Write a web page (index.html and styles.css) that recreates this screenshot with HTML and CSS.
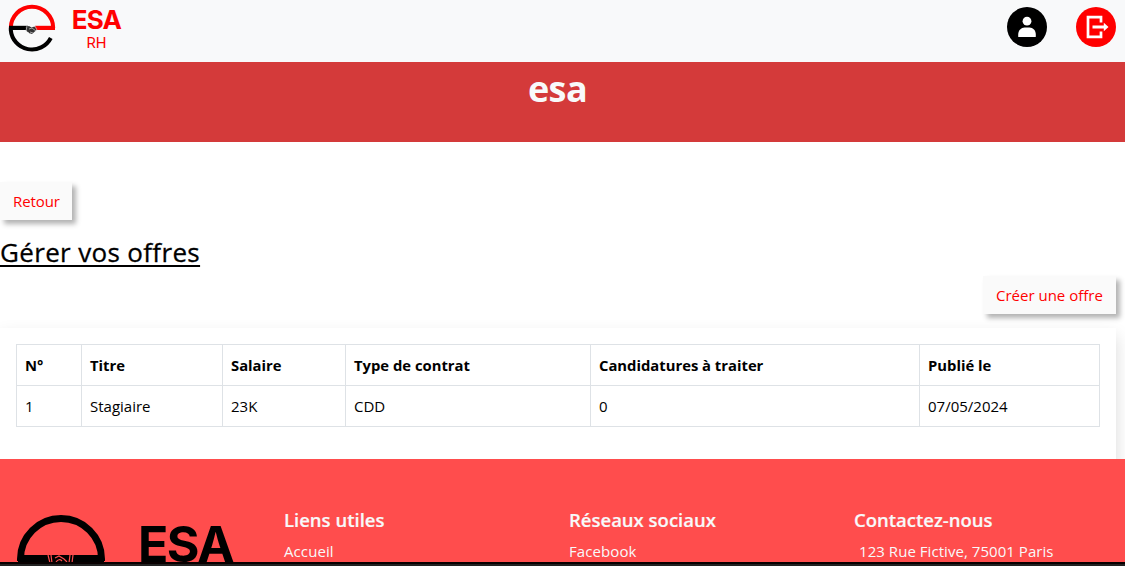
FILE: index.html
```html
<!DOCTYPE html>
<html lang="fr">
<head>
<meta charset="utf-8">
<title>ESA RH</title>
<link rel="stylesheet" href="styles.css">
</head>
<body>
<div class="page">
  <header class="topbar">
    <div class="brand">
      <svg class="brand-mark" width="48" height="48" viewBox="0 0 48 48" fill="none">
        <path d="M2.8 24V26A21.2 21.2 0 0 0 42.8 34" stroke="#000" stroke-width="4"/>
        <path d="M2.8 24A21.2 21.2 0 0 1 45.2 24" stroke="#f00" stroke-width="4"/>
        <path d="M1 21.8H20V26H1Z" fill="#000"/>
        <path d="M27 21.8H47V26H27Z" fill="#f00"/>
        <path d="M17.5 23L21 22L23.5 23.5L26.5 22.5L28.5 26L24 30L21 29L18.5 27Z" fill="#333"/>
        <path d="M19 22L18 27M21 25L24 24L28 27M22 28L25 29M27 22L29 26M20 28L22 30" stroke="#bbb" stroke-width=".8"/>
      </svg>
      <div class="brand-text"><span class="brand-name">ESA</span><span class="brand-sub">RH</span></div>
    </div>
    <nav class="actions">
      <svg width="40" height="40" viewBox="0 0 40 40">
        <circle cx="20" cy="20" r="20" fill="#000"/>
        <circle cx="20" cy="14.2" r="4.4" fill="#fff"/>
        <path d="M11.2 29.5V28C11.2 23.3 14.2 20.5 17.5 20.5H22.5C26 20.5 28.8 23.3 28.8 28V29.5Q28.8 30 28.2 30H11.8Q11.2 30 11.2 29.5Z" fill="#fff"/>
      </svg>
      <svg width="40" height="40" viewBox="0 0 40 40">
        <circle cx="20" cy="20" r="20" fill="#f00"/>
        <path d="M25 15.5V10.2H12V29.8H25V24.5" fill="none" stroke="#fff" stroke-width="2.7"/>
        <path d="M16.5 18.6H27.8V15.8L32.5 20L27.8 24.2V21.4H16.5Z" fill="#fff"/>
      </svg>
    </nav>
  </header>
  <section class="banner"><h1>esa</h1></section>
  <main>
    <a class="btn back"><span>Retour</span></a>
    <h2><span>Gérer vos offres</span></h2>
    <div class="create-row"><a class="btn create"><span>Créer une offre</span></a></div>
    <section class="card">
      <table>
        <colgroup><col class="c1"><col class="c2"><col class="c3"><col class="c4"><col class="c5"><col class="c6"></colgroup>
        <thead><tr><th>N<span class="degree">°</span></th><th>Titre</th><th>Salaire</th><th>Type de contrat</th><th>Candidatures à traiter</th><th>Publié le</th></tr></thead>
        <tbody><tr><td>1</td><td>Stagiaire</td><td>23K</td><td>CDD</td><td>0</td><td>07/05/2024</td></tr></tbody>
      </table>
    </section>
  </main>
  <footer>
    <div class="foot-logo">
      <svg width="88" height="88" viewBox="0 0 88 88" fill="none">
        <path d="M3.5 46V44A40.5 40.5 0 0 1 84.5 44V46" stroke="#000" stroke-width="7"/>
        <path d="M1 40H87V49H1Z" fill="#000"/>
        <path d="M31 40L33 48M34 40L35 48M38 43L42 41L47 44L50 47M39 47Q42 43 45 46M53 40L52 48M56 40L55 48" stroke="#ff4d4d" stroke-width="1.2"/>
      </svg>
      <span class="foot-name">ESA</span>
    </div>
    <div class="foot-col"><h3>Liens utiles</h3><p>Accueil</p></div>
    <div class="foot-col"><h3>Réseaux sociaux</h3><p>Facebook</p></div>
    <div class="foot-col"><h3>Contactez-nous</h3><p class="address">123 Rue Fictive, 75001 Paris</p></div>
  </footer>
  <div class="bottom-edge"></div>
</div>
</body>
</html>
```
FILE: styles.css
```css
* { box-sizing: border-box; }
body { margin: 0; background: #fff; color: #000; font: 15px/24px "Segoe UI", "Open Sans", "Noto Sans", sans-serif; }
h1, h2, h3, p { margin: 0; }
svg { display: block; flex: none; }
.page { width: 1125px; height: 566px; overflow: hidden; display: flex; flex-direction: column; }
.topbar { height: 62px; flex: none; background: #f8f9fa; display: flex; justify-content: space-between; padding: 4px 9px 0 8px; }
.brand { display: flex; gap: 16px; }
.brand-text { display: flex; flex-direction: column; align-items: center; width: 49px; color: #f00; font-family: Inter, sans-serif; }
.brand-name { font-size: 26px; font-weight: 700; line-height: 32px; letter-spacing: -.8px; }
.brand-sub { font-family: Roboto, sans-serif; font-size: 15px; line-height: 14px; }
.actions { display: flex; gap: 29px; padding-top: 3px; }
.banner { height: 80px; flex: none; background: #d43a3a; color: #f8f9fa; text-align: center; padding: 3px 10px 0 0; }
h1 { font-size: 36px; line-height: 48px; font-weight: 700; letter-spacing: -.6px; }
main { height: 317px; flex: none; padding-top: 40px; display: flex; flex-direction: column; align-items: flex-start; overflow: hidden; }
.btn { display: block; height: 38px; background: #fafafa; color: #f00; box-shadow: 4px 4px 5px rgba(0,0,0,.3); padding: 7px 13px; white-space: nowrap; }
.back { width: 72px; letter-spacing: -.1px; }
h2 { height: 34px; margin-top: 15px; font-size: 26px; line-height: 34px; font-weight: 500; letter-spacing: .34px; -webkit-text-stroke: .3px #000; text-decoration: underline; text-decoration-thickness: 2px; text-underline-offset: 3px; }
.create-row { width: 1116px; display: flex; justify-content: flex-end; margin-top: 7px; }
.create { width: 133px; }
.card { width: 1116px; height: 160px; margin-top: 14px; flex: none; background: #fff; box-shadow: 0 8px 16px rgba(0,0,0,.15); padding: 16px; }
table { width: 1084px; border-collapse: collapse; table-layout: fixed; }
th, td { height: 41px; border: 1px solid #dee2e6; padding: 0 8px; text-align: left; line-height: 24px; white-space: nowrap; }
th { font-weight: 700; font-size: 14.8px; padding-bottom: 1px; }
.degree { font-family: "Noto Sans", sans-serif; font-weight: 700; line-height: 1; }
.c1 { width: 65px; }
.c2 { width: 141px; }
.c3 { width: 123px; }
.c4 { width: 245px; }
.c5 { width: 329px; }
.c6 { width: 180px; }
footer { height: 103px; flex: none; background: #ff4d4d; color: #f8f9fa; display: grid; grid-template-columns: 284px 285px 285px 271px; overflow: hidden; padding-top: 49px; }
.foot-logo { display: flex; gap: 33px; padding: 7px 0 0 17px; }
.foot-name { color: #000; margin-top: -1px; height: 46px; font: 700 50px/60px Inter, sans-serif; letter-spacing: -1.6px; }
h3 { font-size: 18.5px; line-height: 24px; font-weight: 600; -webkit-text-stroke: .2px #f8f9fa; }
.foot-col p { margin-top: 7px; letter-spacing: .1px; white-space: nowrap; }
.foot-col .address { padding-left: 5px; letter-spacing: .05px; }
.bottom-edge { height: 4px; flex: none; background: #222; border-top: 2px solid #080000; }
```
